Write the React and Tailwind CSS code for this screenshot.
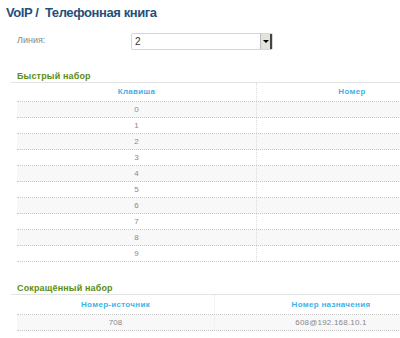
import React from "react";

const keys = ["0", "1", "2", "3", "4", "5", "6", "7", "8", "9"];

function Section({ title }) {
  return (
    <div className="ml-[11px] h-[14px] border-b border-[#e3e3e3] pl-[6px] pt-[1px] text-[9px] leading-[12px] font-bold tracking-[0.15px] text-[#5b8d16]">
      {title}
    </div>
  );
}

export default function App() {
  return (
    <div
      className="w-[400px] h-[338px] overflow-hidden bg-white"
      style={{ fontFamily: '"Liberation Sans", Arial, sans-serif' }}
    >
      <div className="h-[24px] pl-[6px] pt-[5px] text-[13px] leading-[16px] font-bold tracking-[-0.4px] text-[#1f4f7c] whitespace-pre">
        VoIP /  Телефонная книга
      </div>

      <div className="flex items-center h-[26px] mt-[4px]">
        <div className="w-[131px] pl-[17px] text-[9px] text-[#888]">Линия:</div>
        <div className="flex h-[17px] w-[142px] items-stretch rounded-[2px] border border-[#d6d6d6] bg-white">
          <div className="flex-1 pl-[3px] text-[10px] leading-[15px] text-[#333]">2</div>
          <div className="flex w-[12px] items-center justify-center border-l border-[#bbb] border-r-2 border-r-[#444] bg-[#e4e2dc]">
            <div className="h-0 w-0 border-x-[3px] border-t-[3px] border-x-transparent border-t-black" />
          </div>
        </div>
      </div>

      <div className="mt-[15px]">
        <Section title="Быстрый набор" />
        <div className="ml-[17px] w-[430px]">
          <div className="flex h-[19px] border-b border-dotted border-[#c8c8c8] text-[8px] font-bold tracking-[0.3px] text-[#3bb3ea]">
            <div className="flex w-[240px] items-center justify-center border-r border-dotted border-[#dcdcdc]">Клавиша</div>
            <div className="flex flex-1 items-center justify-center">Номер</div>
          </div>
          {keys.map((k, i) => (
            <div
              key={k}
              className={`flex h-[16px] border-b border-dotted border-[#c8c8c8] text-[8px] text-[#888] ${i % 2 === 0 ? "bg-[#f8f8f8]" : "bg-white"}`}
            >
              <div className="flex w-[240px] items-center justify-center border-r border-dotted border-[#dcdcdc]">{k}</div>
              <div className="flex-1" />
            </div>
          ))}
        </div>
      </div>

      <div className="mt-[19px]">
        <Section title="Сокращённый набор" />
        <div className="ml-[17px] w-[430px]">
          <div className="flex h-[20px] border-b border-dotted border-[#c8c8c8] text-[8px] font-bold tracking-[0.3px] text-[#3bb3ea]">
            <div className="flex w-[198px] items-center justify-center border-r border-dotted border-[#ececec]">Номер-источник</div>
            <div className="flex flex-1 items-center justify-center">Номер назначения</div>
          </div>
          <div className="flex h-[16px] border-b border-dotted border-[#c8c8c8] bg-[#f8f8f8] text-[8px] text-[#888]">
            <div className="flex w-[198px] items-center justify-center border-r border-dotted border-[#ececec]">708</div>
            <div className="flex flex-1 items-center justify-center tracking-[0.2px]">608@192.168.10.1</div>
          </div>
        </div>
      </div>
    </div>
  );
}
